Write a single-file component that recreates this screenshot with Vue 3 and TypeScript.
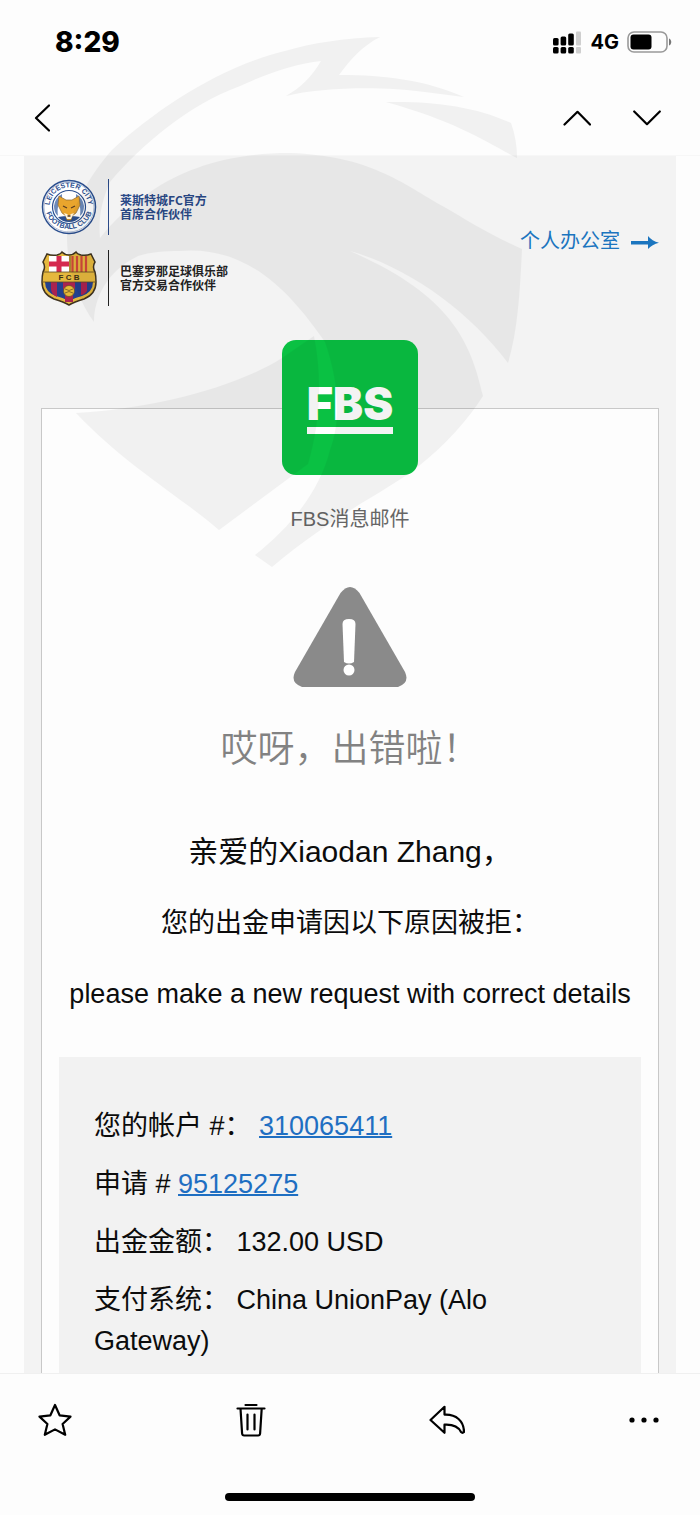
<script setup lang="ts">
interface Detail {
  label: string
  value: string
  link: boolean
}

const details: Detail[] = [
  { label: '您的帐户 #：\u00a0', value: '310065411', link: true },
  { label: '申请 # ', value: '95125275', link: true },
  { label: '出金金额： ', value: '132.00 USD', link: false },
  { label: '支付系统： ', value: 'China UnionPay (Alo Gateway)', link: false },
]
</script>

<template>
  <div class="screen">
    <div class="status">
      <span class="time">8:29</span>
      <div class="signals">
        <svg class="bars" width="29" height="23" viewBox="0 0 29 23" aria-hidden="true">
          <g fill="#000">
            <rect x="0" y="7" width="5.600" height="7.500" rx="1.5" />
            <rect x="7.600" y="5.500" width="5.600" height="9" rx="1.5" />
            <rect x="15.200" y="2.500" width="5.600" height="12" rx="1.5" />
            <rect x="0" y="16" width="5.600" height="6.500" rx="1.5" />
            <rect x="7.600" y="16" width="5.600" height="6.500" rx="1.5" />
            <rect x="15.200" y="16" width="5.600" height="6.500" rx="1.5" />
          </g>
          <g fill="#cfcfcf">
            <rect x="23" y="0.500" width="5" height="14" rx="1" />
            <rect x="23" y="16" width="5" height="6.500" rx="1" />
          </g>
        </svg>
        <span class="network">4G</span>
        <svg width="45" height="22" viewBox="0 0 45 22" aria-hidden="true">
          <rect x="1" y="1" width="39" height="20" rx="6" fill="none" stroke="#999" stroke-width="1.6" />
          <rect x="3.500" y="3.500" width="21" height="15" rx="3" fill="#000" />
          <path d="M42 7.500c3 1 3 6 0 7z" fill="#777" />
        </svg>
      </div>
    </div>

    <nav class="nav">
      <button type="button" aria-label="返回">
        <svg width="16" height="28" viewBox="0 0 16 28"><path d="M15 1.500 2 14 15 26.500" /></svg>
      </button>
      <div class="pager">
        <button type="button" aria-label="上一封">
          <svg width="28" height="16" viewBox="0 0 28 16"><path d="M1.500 14.500 14.500 1.800 27 14.500" /></svg>
        </button>
        <button type="button" aria-label="下一封">
          <svg width="28" height="16" viewBox="0 0 28 16"><path d="M1.200 1.500 14 14.200 26.800 1.500" /></svg>
        </button>
      </div>
    </nav>

    <main class="mail">
      <header class="mail-head">
        <div class="partners">
          <div class="partner city">
            <svg width="56" height="56" viewBox="0 0 56 56" aria-hidden="true">
              <defs>
                <path id="arc-top" d="M9 31A19.300 19.300 0 1 1 47 31" />
                <path id="arc-bottom" d="M4 26A24 24 0 1 0 52 26" />
              </defs>
              <circle cx="28" cy="28" r="26.500" fill="#fff" stroke="#2b4f8f" stroke-width="1.500" />
              <circle cx="28" cy="28" r="25" fill="none" stroke="#6681b0" stroke-width="0.500" />
              <circle cx="28" cy="28" r="16.500" fill="#fff" stroke="#2b4f8f" stroke-width="1.200" />
              <path d="M21 15q-7 4-8 12 0 7 4 10c-1-7 0-13 4-17zM35 15q7 4 8 12 0 7-4 10c1-7 0-13-4-17z" fill="#6d8bbb" />
              <path d="M17 38q11-2 22 0-4 5-11 5t-11-5z" fill="#2b4f8f" />
              <path d="M18 17l7 4h6l7-4 1 9-4 8-4 3-1 4h-4l-1-4-4-3-4-8z" fill="#e9a52d" stroke="#8d6a35" stroke-width="0.700" />
              <path d="M23 34l3 1 2 2 2-2 3-1-3 6h-4z" fill="#fff3d8" />
              <path d="M22 27l4 2M34 27l-4 2M26.500 37h3" stroke="#573c20" stroke-width="1.300" />
              <text class="ring"><textPath href="#arc-top" startOffset="50%" text-anchor="middle">LEICESTER CITY</textPath></text>
              <text class="ring"><textPath href="#arc-bottom" startOffset="50%" text-anchor="middle">FOOTBALL CLUB</textPath></text>
            </svg>
            <p>莱斯特城FC官方<br />首席合作伙伴</p>
          </div>
          <div class="partner barca">
            <svg width="56" height="56" viewBox="0 0 56 56" aria-hidden="true">
              <defs>
                <clipPath id="shield">
                  <path d="M6 4q5 2 10 1 4-1 5-3 3 3 7 3t7-3q1 2 5 3 5 1 10-1l4 8q-3 5 0 10 1 4 1 10 0 12-12 17-10 3-15 6-5-3-15-6Q1 44 1 32q0-6 1-10 3-5 0-10z" />
                </clipPath>
              </defs>
              <g clip-path="url(#shield)">
                <rect width="56" height="56" fill="#e5b83e" />
                <rect x="8" y="6" width="20" height="16" fill="#fff" />
                <path d="M15.500 6h5v16h-5zM8 11.500h20v5H8z" fill="#d5294e" />
                <path d="M31.500 6v16M36 6v16M40.500 6v16M45 6v16" stroke="#d0493a" stroke-width="2.200" />
                <path d="M4 32h48q0 10-11 14-8 2-13 5-5-3-13-5Q4 42 4 32z" fill="#24418f" />
                <path d="M10 32h6v15q-6-3-6-8zM22 32h12v7H22zM24 44h8v8h-8zM40 32h6v9q-3 4-6 4z" fill="#aa2350" />
              </g>
              <path d="M6 4q5 2 10 1 4-1 5-3 3 3 7 3t7-3q1 2 5 3 5 1 10-1l4 8q-3 5 0 10 1 4 1 10 0 12-12 17-10 3-15 6-5-3-15-6Q1 44 1 32q0-6 1-10 3-5 0-10z" fill="none" stroke="#403420" stroke-width="1.500" />
              <path d="M3 22h50M2 32h52M29 6v16" stroke="#5c4727" stroke-width="0.800" />
              <circle cx="28" cy="41" r="5.500" fill="#e6b936" stroke="#604d25" stroke-width="0.700" />
              <path d="M24 39q4 3 8 0M24 43q4-3 8 0" fill="none" stroke="#6c5627" stroke-width="0.800" />
              <text class="fcb" x="28" y="30" text-anchor="middle">F C B</text>
            </svg>
            <p>巴塞罗那足球俱乐部<br />官方交易合作伙伴</p>
          </div>
        </div>
        <a class="office" href="#">
          个人办公室
          <svg width="28" height="18" viewBox="0 0 28 18" aria-hidden="true">
            <path d="M0 9h17V4Q21 9 28 10.700 21 12.500 17 17V12.500H0z" fill="#1b75bf" />
          </svg>
        </a>
      </header>

      <article class="card">
        <div class="logo"><span>FBS</span></div>
        <p class="caption">FBS消息邮件</p>
        <svg class="warning" width="114" height="102" viewBox="0 0 114 102" aria-hidden="true">
          <path d="M47.500 7Q57-5 66.500 7L112 86q5 11-7 15H9q-12-4-7-15z" fill="#8a8a8a" />
          <path d="M49.500 38q0-5 6.500-5t6.500 5l-1.500 38q-5 3-10 0z" fill="#fff" />
          <circle cx="56" cy="84" r="5.500" fill="#fff" />
        </svg>
        <h1>哎呀，出错啦！</h1>
        <h2>亲爱的Xiaodan Zhang，</h2>
        <p class="reason">您的出金申请因以下原因被拒：</p>
        <p class="message">please make a new request with correct details</p>
        <div class="details">
          <template v-for="d in details" :key="d.label">
            <p v-if="d.link">{{ d.label }}<a href="#">{{ d.value }}</a></p>
            <p v-else>{{ d.label + d.value }}</p>
          </template>
        </div>
      </article>
    </main>

    <footer class="footer">
      <div class="tools">
        <button type="button" aria-label="收藏">
          <svg width="34" height="34" viewBox="0 0 34 34"><path d="M17 2l4.600 10.300L32.500 13.600 24.600 21l2.600 10.800L17 26.400 6.800 31.800 9.400 21 1.500 13.600 12.400 12.300z" /></svg>
        </button>
        <button type="button" aria-label="删除">
          <svg width="30" height="34" viewBox="0 0 30 34"><path d="M9.500 2h11M1.500 5.500h27M4.500 5.500l1.600 25q.2 2 2 2h14q1.800 0 2-2l1.600-25M11.500 11.500v15M18.500 11.500v15" /></svg>
        </button>
        <button type="button" aria-label="回复">
          <svg width="36" height="30" viewBox="0 0 36 30"><path d="M1.500 15 15.500 1.800V9.600C27 9 35 16 35 27q-1.500 1.500-3 0-4-8-16.500-7.300v8.100z" /></svg>
        </button>
        <button type="button" aria-label="更多">
          <svg class="dots" width="30" height="6" viewBox="0 0 30 6"><circle cx="3" cy="3" r="2.600" /><circle cx="15" cy="3" r="2.600" /><circle cx="27" cy="3" r="2.600" /></svg>
        </button>
      </div>
      <div class="home"></div>
    </footer>

    <svg class="watermark" width="540" height="580" viewBox="0 0 540 580" aria-hidden="true">
      <path d="M380 37C345 38 312 43 285 51 220 67 158 108 112 150 94 170 75 200 67 232 66 268 78 300 94 322 94 300 105 272 138 256 150 252 165 251 179 251 C248 245 290 292 325 342 338 380 342 418 330 450 320 490 292 526 255 555L272 567C340 510 390 490 420 465 445 445 468 420 483 396 470 338 448 294 350 251 410 268 470 312 508 363 518 330 520 290 522 249 490 235 465 219 446 208 400 182 370 156 290 153 230 153 185 168 150 192 130 206 114 220 100 238 98 218 102 200 110 182 142 144 190 104 240 86 270 72 296 64 321 61 312 77 300 88 286 96 320 87 385 86 425 92L464 97C425 80 385 75 339 75 350 60 362 46 380 37z" />
      <path d="M386 102C430 101 475 106 511 123 515 134 517 146 517 158 485 141 455 121 386 102z" />
      <path d="M76 413C150 409 235 388 282 358L314 336C322 376 321 420 308 464L219 530C185 500 125 465 76 413z" />
    </svg>
  </div>
</template>

<style>
body {
  background: #fdfdfd;
}
</style>

<style scoped>
.screen {
  position: relative;
  display: flex;
  flex-direction: column;
  min-height: 100vh;
  background: #fdfdfd;
  color: #0c0c0c;
  font-family: "Liberation Sans", "Noto Sans CJK SC", sans-serif;
}
p, h1, h2 { margin: 0; font-weight: 400; }
svg { display: block; }
button { display: block; margin: 0; padding: 0; border: 0; background: none; }
button path { fill: none; stroke: #000; stroke-width: 2.2; stroke-linecap: round; stroke-linejoin: round; }
.status {
  display: flex;
  align-items: center;
  justify-content: space-between;
  height: 84px;
  padding: 0 28px 0 55px;
  font-family: Inter, sans-serif;
  color: #000;
}
.time { font-size: 28px; font-weight: 800; }
.signals { display: flex; align-items: center; gap: 8px; }
.network { font-size: 20px; font-weight: 700; }
.nav {
  display: flex;
  align-items: center;
  justify-content: space-between;
  height: 67px;
  padding: 0 39px 4px 34px;
  border-bottom: 1px solid #f7f7f7;
}
.pager { display: flex; gap: 42px; }
.mail {
  flex: 1;
  display: flex;
  flex-direction: column;
  margin: 0 24px;
  padding: 0 17px;
  background: #f3f3f3;
}
.mail-head {
  display: flex;
  justify-content: space-between;
  align-items: flex-start;
  padding: 23px 0 102px;
}
.partners { display: flex; flex-direction: column; gap: 15px; }
.partner { display: flex; align-items: center; }
.partner p {
  display: grid;
  align-content: center;
  height: 56px;
  margin-left: 11px;
  padding-left: 11px;
  border-left: 1px solid currentColor;
  font: 700 12px/14px "Noto Sans CJK SC", sans-serif;
}
.city p { color: #2b4a88; }
.barca p { color: #222; }
.ring { font: 700 7px "Liberation Sans", sans-serif; fill: #2b4f8f; }
.fcb { font: 700 8px "Liberation Sans", sans-serif; fill: #3d3018; }
.office {
  display: flex;
  align-items: center;
  gap: 11px;
  margin-top: 47px;
  font-size: 20px;
  line-height: 30px;
  color: #1b75bf;
  text-decoration: none;
}
.card {
  flex: 1;
  display: flex;
  flex-direction: column;
  align-items: center;
  padding: 0 17px;
  border: 1px solid #c8c8c8;
  border-bottom: 0;
  background: #fdfdfd;
  text-align: center;
}
.logo {
  display: flex;
  justify-content: center;
  align-items: center;
  width: 136px;
  height: 135px;
  margin-top: -69px;
  border-radius: 14px;
  background: #0ac143;
}
.logo span {
  border-bottom: 7px solid #fff;
  color: #fff;
  font: 900 45px/46px Inter, sans-serif;
}
.caption { margin-top: 30px; font-size: 20px; line-height: 28px; color: #666; }
.warning { margin-top: 53px; }
h1 {
  margin-top: 38px;
  font-size: 37px;
  line-height: 48px;
  font-weight: 350;
  color: #828282;
}
h2 { margin-top: 58px; font-size: 30px; line-height: 40px; }
.reason { margin-top: 31px; font-size: 27px; line-height: 40px; }
.message { margin-top: 31px; font-size: 27px; line-height: 40px; }
.details {
  flex: 1;
  align-self: stretch;
  display: flex;
  flex-direction: column;
  gap: 17px;
  margin-top: 43px;
  padding: 49px 35px 11px;
  background: #f2f2f2;
  font-size: 27px;
  line-height: 41px;
  text-align: left;
}
.details a { color: #1f6fc2; text-decoration: underline; text-decoration-thickness: 2px; }
.footer {
  display: flex;
  flex-direction: column;
  align-items: center;
  border-top: 1px solid #f0f0f0;
}
.tools {
  display: flex;
  align-items: center;
  justify-content: space-between;
  align-self: stretch;
  height: 92px;
  padding: 0 41px 0 38px;
}
.dots { fill: #000; }
.home {
  width: 250px;
  height: 8px;
  margin: 27px 0 14px;
  border-radius: 4px;
  background: #000;
}
.watermark {
  position: absolute;
  top: 0;
  left: 0;
  fill: #000;
  opacity: 0.043;
  pointer-events: none;
}
</style>
